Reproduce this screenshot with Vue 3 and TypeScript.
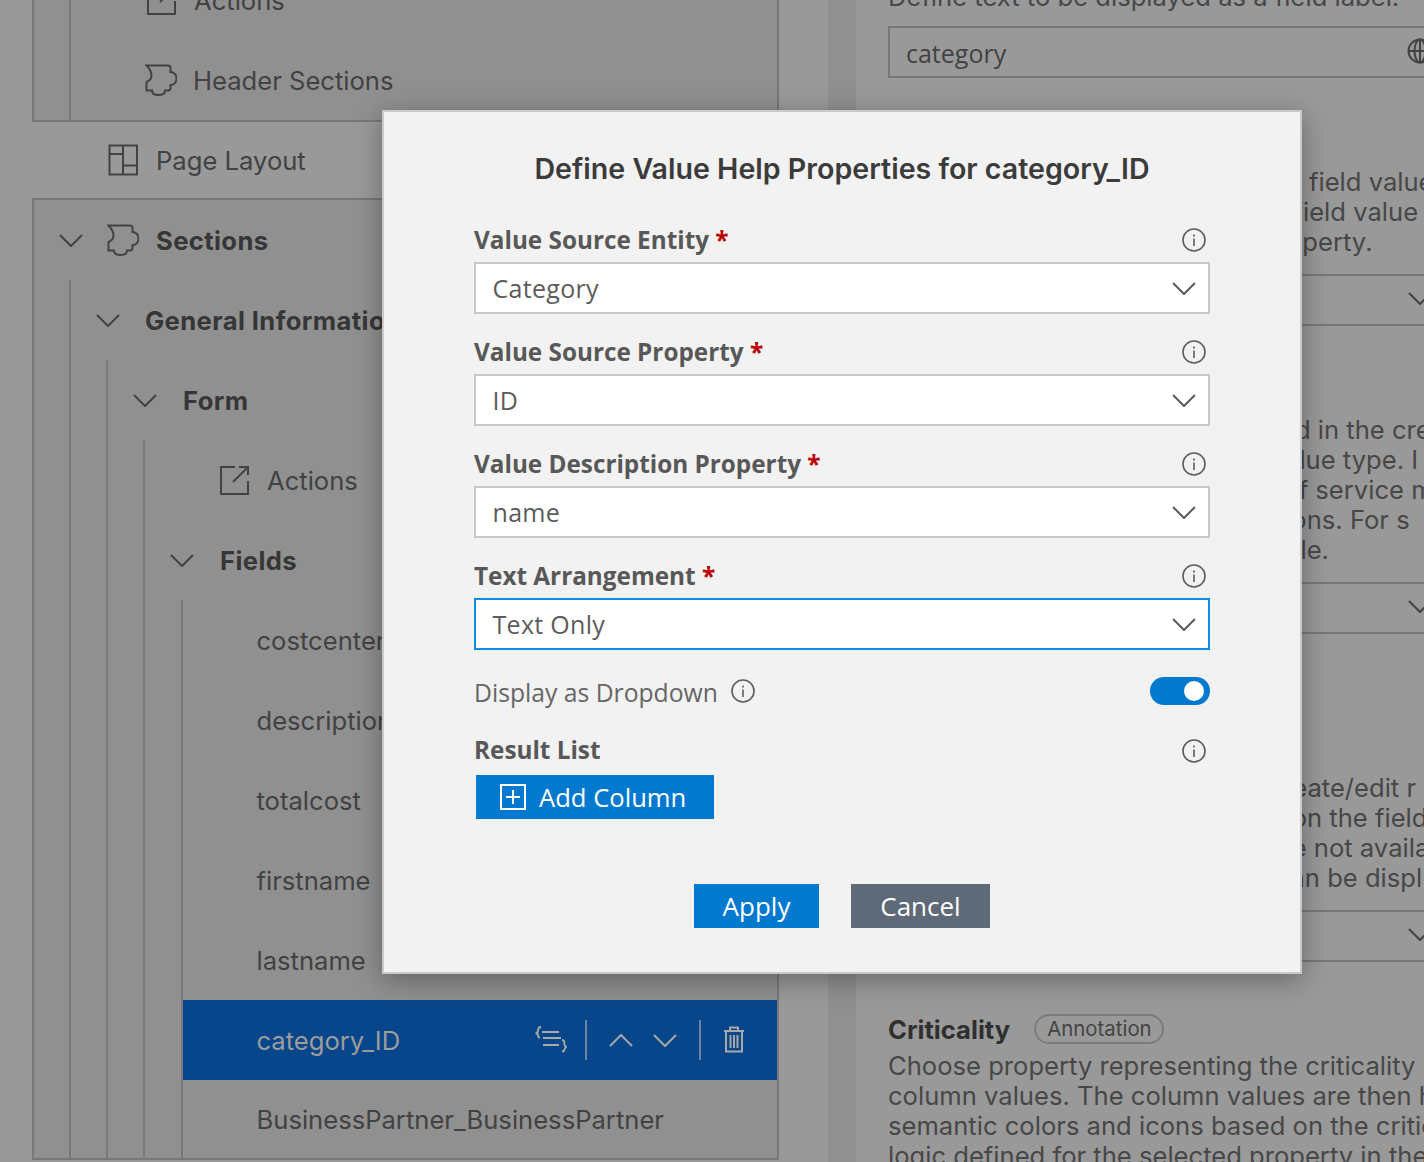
<script setup lang="ts">
const leaves: string[] = ['costcenter', 'description', 'totalcost', 'firstname', 'lastname']
const fields = [
  { label: 'Value Source Entity', value: 'Category', focus: false },
  { label: 'Value Source Property', value: 'ID', focus: false },
  { label: 'Value Description Property', value: 'name', focus: false },
  { label: 'Text Arrangement', value: 'Text Only', focus: true },
]
const puzzle = 'M1.500 1.500H23Q25.500 1.500 25.500 4V8C29 8 31.500 11 31.500 14.500C31.500 18 29 21 25.500 21V24Q25.500 26.500 23 26.500H20C20 29.500 17 31 13.500 31C10 31 7 29.500 7 26.500H1.500V18C4 17 6.500 15 6.500 11.500C6.500 7.500 4 4 1.500 1.500Z'
const actionsIcon = 'M15 1H1V28H28V15M19 1H28V9M28 1L13 16'
</script>

<template>
  <div class="page">
    <aside class="left">
      <div class="box first">
        <div class="guide lvl0">
          <div class="row pad-a">
            <svg class="ico28" viewBox="0 0 29 29"><path :d="actionsIcon" /></svg>
            <span class="txt">Actions</span>
          </div>
          <div class="row pad-a2">
            <svg class="ico32" viewBox="0 0 32 32"><path :d="puzzle" /></svg>
            <span class="txt">Header Sections</span>
          </div>
        </div>
      </div>
      <div class="row layout-row">
        <svg class="ico-layout" viewBox="0 0 30 32"><path d="M1.500 1.500H29V30.500H1.500ZM15 1.500V30.500M1.500 10H15M15 21.500H29" /></svg>
        <span class="txt">Page Layout</span>
      </div>
      <div class="box second">
        <div class="row sections-row">
          <svg class="chev" viewBox="0 0 24 13"><path d="M1 1L12 12L23 1" /></svg>
          <svg class="ico32" viewBox="0 0 32 32"><path :d="puzzle" /></svg>
          <span class="txt strong">Sections</span>
        </div>
        <div class="guide lvl1">
          <div class="row general-row">
            <svg class="chev" viewBox="0 0 24 13"><path d="M1 1L12 12L23 1" /></svg>
            <span class="txt strong">General Information</span>
          </div>
          <div class="guide lvl2">
            <div class="row form-row">
              <svg class="chev" viewBox="0 0 24 13"><path d="M1 1L12 12L23 1" /></svg>
              <span class="txt strong">Form</span>
            </div>
            <div class="guide lvl3">
              <div class="row actions-row">
                <svg class="ico28" viewBox="0 0 29 29"><path :d="actionsIcon" /></svg>
                <span class="txt">Actions</span>
              </div>
              <div class="row fields-row">
                <svg class="chev" viewBox="0 0 24 13"><path d="M1 1L12 12L23 1" /></svg>
                <span class="txt strong">Fields</span>
              </div>
              <div class="guide lvl4">
                <div v-for="leaf in leaves" :key="leaf" class="row leaf">
                  <span class="txt">{{ leaf }}</span>
                </div>
                <div class="row leaf selected">
                  <span class="txt">category_ID</span>
                  <div class="row-actions">
                    <svg class="ra-code" viewBox="0 0 33 27"><path d="M7 1C4.500 1 4 3 4 4.500C4 6 3 7 1.500 7C3 7 4 8 4 9.500C4 10.500 4.500 11.500 6 11.500M8 6H25M9 12H27M9 19H25M28 14C30.500 14 30.500 17 30.500 18.500C30.500 20 31 20.500 32.500 21C31 21.500 30.500 22 30.500 23.500C30.500 25 30 25.500 28 25.500" /></svg>
                    <span class="ra-sep"></span>
                    <svg class="chev" viewBox="0 0 24 13"><path d="M1 12L12 1L23 12" /></svg>
                    <svg class="chev" viewBox="0 0 24 13"><path d="M1 1L12 12L23 1" /></svg>
                    <span class="ra-sep"></span>
                    <svg class="ra-trash" viewBox="0 0 22 27"><path d="M1 5H21M7 5V1.500H15V5M3 5V25.500H19V5M7.500 9V22M11 9V22M14.500 9V22" /></svg>
                  </div>
                </div>
                <div class="row leaf last">
                  <span class="txt">BusinessPartner_BusinessPartner</span>
                </div>
              </div>
            </div>
          </div>
        </div>
      </div>
    </aside>

    <div class="gutter"></div>

    <main class="right">
      <div class="line">Define text to be displayed as a field label.</div>
      <div class="input mt14">
        <span class="input-value">category</span>
        <svg class="globe" viewBox="0 0 26 26"><circle cx="13" cy="13" r="11.500" /><ellipse cx="13" cy="13" rx="5.500" ry="11.500" /><path d="M13 1.500V24.500M1.500 13H24.500" /></svg>
      </div>
      <div class="para mt89">
        <div class="line">Select how to display text on each field value</div>
        <div class="line">The key is the field value and the field value c</div>
        <div class="line">the description is from the key property.</div>
      </div>
      <div class="input mt17"><svg class="chev bar-chev" viewBox="0 0 24 13"><path d="M1 1L12 12L23 1" /></svg></div>
      <div class="para mt89">
        <div class="line">Define the field control that is used in the cre</div>
        <div class="line">depending upon the property's value type. I</div>
        <div class="line">specified in the OData metadata of service m</div>
        <div class="line">the fields and their input suggestions. For s</div>
        <div class="line">the value help field is not applicable.</div>
      </div>
      <div class="input mt17"><svg class="chev bar-chev" viewBox="0 0 24 13"><path d="M1 1L12 12L23 1" /></svg></div>
      <div class="para mt139">
        <div class="line">Hide and show this field on the create/edit r</div>
        <div class="line">Makes it hidden or visible, based on the field</div>
        <div class="line">If the values from this property are not availa</div>
        <div class="line">In this case, only the value field can be displ</div>
      </div>
      <div class="input mt17"><svg class="chev bar-chev" viewBox="0 0 24 13"><path d="M1 1L12 12L23 1" /></svg></div>
      <div class="crit-head">
        <span class="crit">Criticality</span>
        <span class="pill">Annotation</span>
      </div>
      <div class="para crit-para">
        <div class="line">Choose property representing the criticality of the</div>
        <div class="line">column values. The column values are then highlighted</div>
        <div class="line">semantic colors and icons based on the criticality</div>
        <div class="line">logic defined for the selected property in the</div>
      </div>
    </main>

    <section class="modal">
      <h2 class="title">Define Value Help Properties for category_ID</h2>
      <div v-for="f in fields" :key="f.label" class="field">
        <div class="label-row">
          <span class="label">{{ f.label }} <em>*</em></span>
          <svg class="info" viewBox="0 0 24 24"><circle cx="12" cy="12" r="11" /><path d="M12 10.500V18M12 6.500V8.500" /></svg>
        </div>
        <div class="select" :class="{ focus: f.focus }">
          <span>{{ f.value }}</span>
          <svg class="chev sel-chev" viewBox="0 0 24 13"><path d="M1 1L12 12L23 1" /></svg>
        </div>
      </div>
      <div class="toggle-row">
        <span class="plain">Display as Dropdown</span>
        <svg class="info" viewBox="0 0 24 24"><circle cx="12" cy="12" r="11" /><path d="M12 10.500V18M12 6.500V8.500" /></svg>
        <span class="toggle"><span class="knob"></span></span>
      </div>
      <div class="label-row result">
        <span class="label">Result List</span>
        <svg class="info" viewBox="0 0 24 24"><circle cx="12" cy="12" r="11" /><path d="M12 10.500V18M12 6.500V8.500" /></svg>
      </div>
      <button class="btn add" type="button">
        <svg class="plus" viewBox="0 0 26 26"><path d="M1 1H25V25H1ZM13 6V20M6 13H20" /></svg>
        Add Column
      </button>
      <div class="footer">
        <button class="btn apply" type="button">Apply</button>
        <button class="btn cancel" type="button">Cancel</button>
      </div>
    </section>
  </div>
</template>

<style scoped>
.page {
  position: relative;
  width: 1424px;
  height: 1162px;
  overflow: hidden;
  display: flex;
  background: #999;
  font-family: Inter, "Liberation Sans", sans-serif;
  font-size: 25.6px;
  color: #424242;
}
svg { fill: none; stroke: currentColor; stroke-width: 2; flex: none; display: block; }

.left { width: 828px; flex: none; padding: 0 50px 0 32px; box-sizing: border-box; margin-top: -40px; }
.box { background: #909090; border: 2px solid #787878; box-sizing: border-box; width: 747px; }
.box.first { border-top: 0; }
.box.second { height: 962px; overflow: hidden; }
.guide { border-left: 2px solid #787878; }
.lvl0, .lvl1 { margin-left: 35px; }
.lvl2 { margin-left: 35px; }
.lvl3 { margin-left: 35px; }
.lvl4 { margin-left: 36px; }

.row { display: flex; align-items: center; height: 80px; white-space: nowrap; }
.strong { font-weight: 700; color: #363636; letter-spacing: 0.4px; }
.pad-a { padding-left: 76px; }
.pad-a2 { padding-left: 74px; }
.pad-a .txt { margin-left: 18px; }
.pad-a2 .txt { margin-left: 16px; }
.ico28 { width: 29px; height: 29px; }
.ico32 { width: 32px; height: 32px; }
.ico-layout { width: 30px; height: 32px; }
.chev { width: 24px; height: 13px; }
.layout-row { height: 76px; padding-left: 76px; }
.layout-row .txt { margin-left: 18px; }
.sections-row { padding-left: 25px; }
.sections-row .ico32 { margin-left: 24px; }
.sections-row .txt { margin-left: 17px; }
.general-row { padding-left: 25px; }
.general-row .txt { margin-left: 25px; }
.form-row { padding-left: 25px; }
.form-row .txt { margin-left: 26px; }
.actions-row { padding-left: 75px; }
.actions-row .txt { margin-left: 18px; }
.fields-row { padding-left: 25px; }
.fields-row .txt { margin-left: 26px; }
.leaf { padding-left: 73.5px; }
.last { height: 78px; }
.selected { background: #07468a; color: #9c9c9c; }
.row-actions { margin-left: auto; padding-right: 32px; display: flex; align-items: center; color: #a8a8a8; }
.ra-code { width: 33px; height: 27px; stroke-width: 1.800; margin-top: -2px; }
.ra-sep { width: 2px; height: 40px; background: #6f84a0; margin: 0 22px 0 18px; }
.row-actions .chev + .chev { margin-left: 20px; }
.row-actions .chev + .ra-sep { margin-left: 22px; }
.ra-trash { width: 22px; height: 27px; margin-top: -2px; }

.gutter { width: 28px; flex: none; background: #909090; }

.right { flex: none; width: 700px; margin-left: 32px; margin-top: -18px; }
.line { height: 30px; line-height: 30px; white-space: nowrap; color: #474747; }
.input { position: relative; height: 52px; box-sizing: border-box; border: 2px solid #787878; padding-left: 16px; line-height: 50px; }
.input-value { font-family: "Open Sans", "Liberation Sans", sans-serif; font-size: 25px; }
.mt14 { margin-top: 14px; }
.mt89 { margin-top: 89px; }
.mt17 { margin-top: 17px; }
.mt139 { margin-top: 139px; }
.globe { position: absolute; left: 517px; top: 10px; width: 26px; height: 26px; }
.bar-chev { position: absolute; left: 518px; top: 16px; }
.crit-head { display: flex; align-items: center; margin-top: 51px; height: 32px; }
.crit { font-weight: 700; color: #2f2f2f; }
.pill { margin-left: 24px; height: 30px; line-height: 26px; box-sizing: border-box; border: 2px solid #7c7c7c; border-radius: 15px; padding: 0 10px 0 11px; font-size: 20.400px; color: #444; }
.crit-para { margin-top: 6px; }

.modal {
  position: absolute;
  left: 382px;
  top: 110px;
  width: 920px;
  height: 864px;
  box-sizing: border-box;
  border: 2px solid #c9c9c9;
  background: #f2f2f2;
  padding: 40px 90px 0;
  box-shadow: 0 6px 26px rgba(0, 0, 0, 0.32);
  font-family: "Open Sans", "Liberation Sans", sans-serif;
  color: #5c5c5c;
}
.title { margin: 0 0 42px; height: 32px; line-height: 34px; text-align: center; font-family: Inter, "Liberation Sans", sans-serif; font-size: 28.600px; font-weight: 600; color: #3b3b3b; white-space: nowrap; }
.field { margin-bottom: 24px; }
.label-row { display: flex; align-items: center; justify-content: space-between; height: 28px; padding-right: 4px; margin-bottom: 8px; }
.label { font-size: 24.300px; font-weight: 700; color: #585858; white-space: nowrap; position: relative; top: -1px; }
.label em { font-style: normal; color: #b00; }
.info { width: 24px; height: 24px; stroke-width: 1.600; color: #5c5c5c; }
.select { display: flex; align-items: center; justify-content: space-between; height: 52px; box-sizing: border-box; border: 2px solid #c9c9c9; background: #fff; padding: 0 12px 0 16.500px; font-size: 25px; letter-spacing: 0.300px; }
.select.focus { border-color: #0a8ee6; }
.sel-chev { color: #5c5c5c; }
.toggle-row { display: flex; align-items: center; height: 28px; margin-top: -24px; position: relative; top: 27px; }
.plain { font-size: 24.700px; color: #666; margin-right: 13px; white-space: nowrap; position: relative; top: 1px; }
.toggle { margin-left: auto; width: 60px; height: 28px; border-radius: 14px; background: #0079cf; display: flex; align-items: center; justify-content: flex-end; padding-right: 6px; box-sizing: border-box; }
.knob { width: 20px; height: 20px; border-radius: 50%; background: #fff; }
.result { margin-top: 58px; margin-bottom: 0; }
.result .info { position: relative; top: 1px; }
.btn { border: 0; border-radius: 0; color: #fff; font-family: inherit; font-size: 26px; height: 44px; padding: 0; display: inline-flex; align-items: center; justify-content: center; }
.add { width: 238px; background: #0079cf; margin: 11px 0 0 2px; justify-content: flex-start; padding-left: 24px; box-sizing: border-box; font-size: 25.600px; }
.plus { width: 26px; height: 26px; margin-right: 13px; color: #fff; }
.footer { display: flex; justify-content: center; gap: 32px; margin-top: 65px; }
.apply { width: 125px; background: #0079cf; }
.cancel { width: 139px; background: #5e6a78; }
</style>
